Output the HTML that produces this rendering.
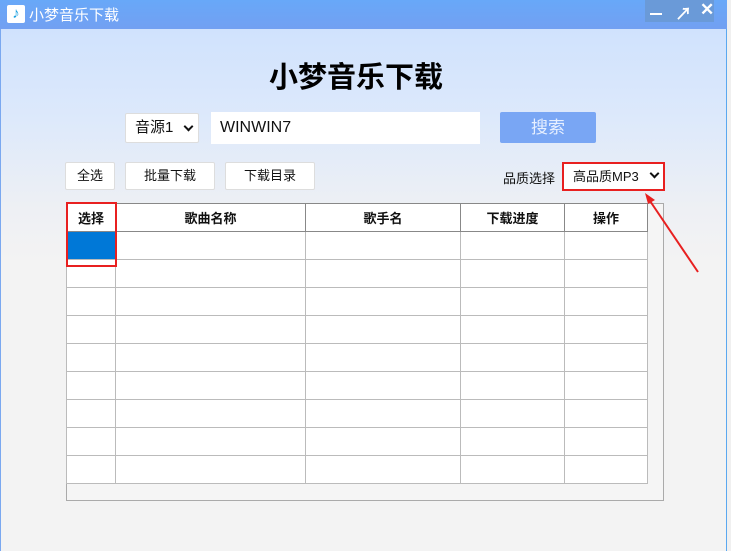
<!DOCTYPE html>
<html><head><meta charset="utf-8"><style>
*{margin:0;padding:0;box-sizing:border-box}
body{width:731px;height:551px;overflow:hidden;background:#f0f0f0;font-family:"Liberation Sans","Noto Sans CJK SC",sans-serif;position:relative}
.win{position:absolute;left:0;top:0;width:727px;height:551px;background:linear-gradient(#cce0fe 0px,#dde9fb 120px,#eef0f4 210px,#f3f3f3 260px,#f3f3f3)}
.title{position:absolute;left:0;top:0;width:727px;height:29px;background:linear-gradient(#68a8f8,#72a0f2);color:#fff;font-size:14px}
.a{position:absolute}
.btn{position:absolute;background:#fff;border:1px solid #ddd;border-radius:2px;font-size:13px;text-align:center;color:#111}
table{border-collapse:collapse;position:absolute;left:66px;top:203px}
td{border:1px solid #bbb;height:28px;padding:0;background:#fff}
th{border:1px solid #888;height:28px;font-size:13px;font-weight:bold;color:#111;background:#fff}
.chev{display:inline-block;width:7px;height:7px;border-right:2px solid #111;border-bottom:2px solid #111;transform:rotate(45deg);position:absolute}
</style></head><body>
<div class="win">
<div class="a" style="left:0;top:0;width:1px;height:551px;background:#7aa8f0"></div>
<div class="a" style="left:726px;top:0;width:1px;height:551px;background:#5aa8f0"></div>
<div class="title">
 <div class="a" style="left:7px;top:5px;width:18px;height:18px;background:#fff;border-radius:2px;color:#1aa0e0;font-size:15px;line-height:18px;text-align:center;font-weight:bold">♪</div>
 <div class="a" style="left:29px;top:4px;font-size:15px">小梦音乐下载</div>
 <div class="a" style="left:645px;top:0;width:69px;height:22px;background:#6a9ad8"></div>
 <div class="a" style="left:650px;top:13px;width:12px;height:2px;background:#fff"></div>
 <div class="a" style="left:675px;top:0px;color:#fff;font-size:17px;font-weight:bold">↗</div>
 <div class="a" style="left:700px;top:0px;color:#fff;font-size:17px;font-weight:bold">✕</div>
</div>
<div class="a" style="left:0;width:712px;top:54px;text-align:center;font-size:29px;font-weight:bold;color:#000">小梦音乐下载</div>
<div class="btn" style="left:125px;top:113px;width:74px;height:30px;line-height:28px;font-size:15px;text-align:left;padding-left:9px">音源1<span class="chev" style="left:59px;top:9px"></span></div>
<div class="a" style="left:211px;top:112px;width:269px;height:32px;background:#fff;font-size:16px;line-height:32px;padding-left:9px;color:#111">WINWIN7</div>
<div class="a" style="left:500px;top:112px;width:96px;height:31px;background:#79a6f4;border-radius:2px;color:#e8f0ff;font-size:17px;line-height:31px;text-align:center">搜索</div>
<div class="btn" style="left:65px;top:162px;width:50px;height:28px;line-height:26px">全选</div>
<div class="btn" style="left:125px;top:162px;width:90px;height:28px;line-height:26px">批量下载</div>
<div class="btn" style="left:225px;top:162px;width:90px;height:28px;line-height:26px">下载目录</div>
<div class="a" style="left:503px;top:168px;font-size:13px;color:#111">品质选择</div>
<div class="a" style="left:562px;top:162px;width:103px;height:29px;border:2px solid #e82020;background:#fff;font-size:13px;line-height:25px;padding-left:9px;color:#111">高品质MP3<span class="chev" style="left:87px;top:6px"></span></div>
<div class="a" style="left:66px;top:203px;width:598px;height:298px;border:1px solid #aaa;background:#f5f5f5"></div>
<table>
<tr><th style="width:49px">选择</th><th style="width:190px">歌曲名称</th><th style="width:155px">歌手名</th><th style="width:104px">下载进度</th><th style="width:83px">操作</th></tr>
<tr><td style="background:#0078d7"></td><td></td><td></td><td></td><td></td></tr>
<tr><td></td><td></td><td></td><td></td><td></td></tr>
<tr><td></td><td></td><td></td><td></td><td></td></tr>
<tr><td></td><td></td><td></td><td></td><td></td></tr>
<tr><td></td><td></td><td></td><td></td><td></td></tr>
<tr><td></td><td></td><td></td><td></td><td></td></tr>
<tr><td></td><td></td><td></td><td></td><td></td></tr>
<tr><td></td><td></td><td></td><td></td><td></td></tr>
<tr><td></td><td></td><td></td><td></td><td></td></tr>
</table>
<div class="a" style="left:66px;top:202px;width:51px;height:65px;border:2px solid #e82020"></div>
<svg class="a" style="left:640px;top:190px" width="70" height="90"><line x1="58" y1="82" x2="8" y2="8" stroke="#e82020" stroke-width="2"/><polygon points="5,3 15,10 8,14" fill="#e82020"/></svg>
</div>
</body></html>
